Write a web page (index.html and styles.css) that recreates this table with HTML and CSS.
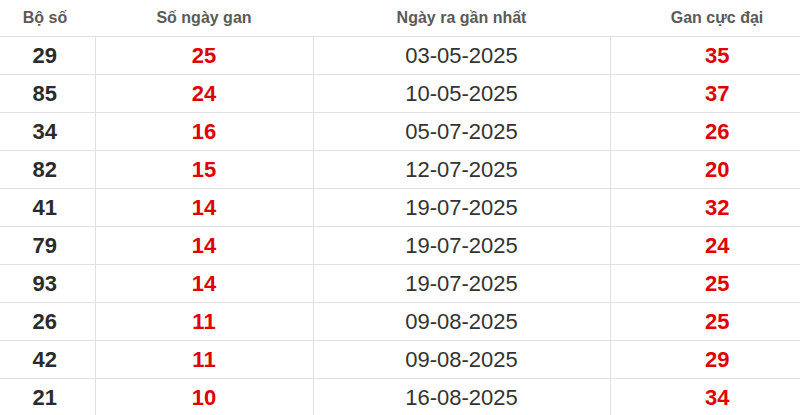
FILE: index.html
```html
<!DOCTYPE html>
<html lang="vi">
<head>
<meta charset="utf-8">
<title>Thống kê lô gan</title>
<link rel="stylesheet" href="styles.css">
</head>
<body>
<div class="wrap">
<table class="gan">
<colgroup>
<col class="c1"><col class="c2"><col class="c3"><col class="c4">
</colgroup>
<thead>
<tr><th>Bộ số</th><th>Số ngày gan</th><th>Ngày ra gần nhất</th><th>Gan cực đại</th></tr>
</thead>
<tbody>
<tr><td class="num">29</td><td class="red">25</td><td class="date">03-05-2025</td><td class="red">35</td></tr>
<tr><td class="num">85</td><td class="red">24</td><td class="date">10-05-2025</td><td class="red">37</td></tr>
<tr><td class="num">34</td><td class="red">16</td><td class="date">05-07-2025</td><td class="red">26</td></tr>
<tr><td class="num">82</td><td class="red">15</td><td class="date">12-07-2025</td><td class="red">20</td></tr>
<tr><td class="num">41</td><td class="red">14</td><td class="date">19-07-2025</td><td class="red">32</td></tr>
<tr><td class="num">79</td><td class="red">14</td><td class="date">19-07-2025</td><td class="red">24</td></tr>
<tr><td class="num">93</td><td class="red">14</td><td class="date">19-07-2025</td><td class="red">25</td></tr>
<tr><td class="num">26</td><td class="red">11</td><td class="date">09-08-2025</td><td class="red">25</td></tr>
<tr><td class="num">42</td><td class="red">11</td><td class="date">09-08-2025</td><td class="red">29</td></tr>
<tr><td class="num">21</td><td class="red">10</td><td class="date">16-08-2025</td><td class="red">34</td></tr>
</tbody>
</table>
</div>
</body>
</html>
```
FILE: styles.css
```css
html, body {
  margin: 0;
  padding: 0;
  background: #fff;
  overflow: hidden;
}
.wrap {
  width: 800px;
  overflow: hidden;
}
.gan {
  width: 829px;
  margin-left: -5px;
  border-collapse: collapse;
  table-layout: fixed;
  font-family: "Liberation Sans", Arial, sans-serif;
}
.c1 { width: 100px; }
.c2 { width: 218px; }
.c3 { width: 297px; }
.c4 { width: 214px; }
.gan th {
  height: 36px;
  padding: 0;
  font-size: 16px;
  font-weight: bold;
  color: #5a5a5a;
  text-align: center;
  vertical-align: middle;
  border-bottom: 1px solid #e0e0e0;
}
.gan td {
  height: 37px;
  padding: 0;
  font-size: 22px;
  text-align: center;
  vertical-align: middle;
  border-bottom: 1px solid #e0e0e0;
  border-left: 1px solid #e0e0e0;
  line-height: 1;
}
.gan td:first-child { border-left: none; }
.num { font-weight: bold; color: #2b2b2b; }
.red { font-weight: bold; color: #e00000; }
.date { color: #333; }
```
